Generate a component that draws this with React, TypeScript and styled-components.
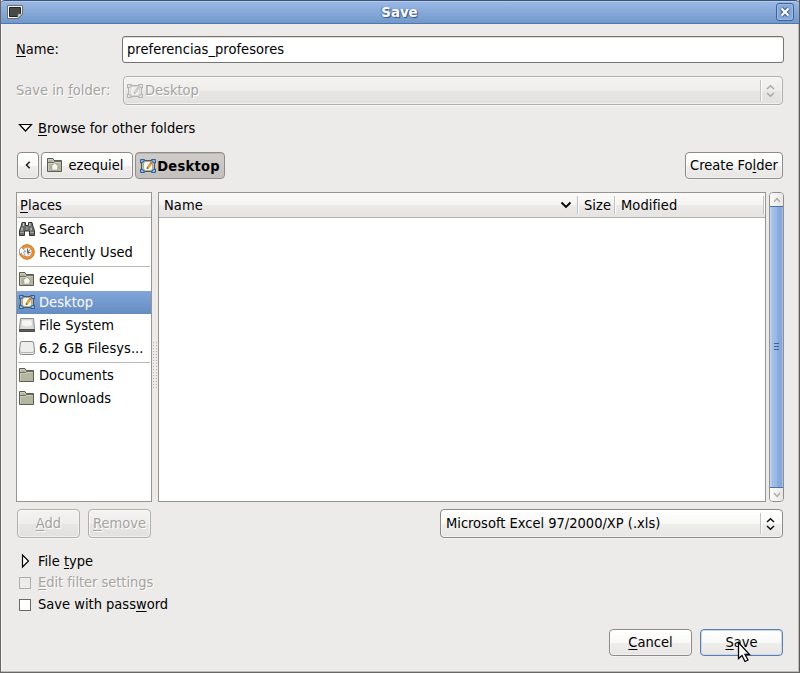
import React from 'react';
import styled, { createGlobalStyle, css } from 'styled-components';

const Global = createGlobalStyle`
  * { box-sizing: border-box; }
  body { margin: 0; }
  u { text-decoration: underline; text-decoration-thickness: 1px; text-underline-offset: 2px; text-decoration-skip-ink: none; }
`;

const Window = styled.main`
  width: 800px; height: 673px; overflow: hidden; position: relative;
  display: flex; flex-direction: column;
  background: #edebea; color: #000;
  border-left: 1px solid #686765; border-right: 1px solid #5c5b5a; border-bottom: 1px solid #686765;
  box-shadow: inset -1px -1px #bdbbb9, inset 1px 0 #f8f7f6;
  font: 14.53px/20px "DejaVu Sans Condensed", "DejaVu Sans", sans-serif;
  font-stretch: condensed;
`;

const TitleBar = styled.header`
  height: 24px; flex: none; margin: 0 -1px; padding: 0 6px 0 7px;
  display: grid; grid-template-columns: 16px 1fr 18px; align-items: center;
  background: linear-gradient(#9bb9e5, #7299cc);
  border-top: 1px solid #3b5375; border-bottom: 1px solid #4f77ac;
  border-radius: 5px 5px 0 0; box-shadow: inset 0 1px #b3cbed;
  color: #fff;
`;
const Title = styled.h1`
  margin: 0; padding: 2px 0 0; text-align: center; font: bold 13.33px/20px "DejaVu Sans", sans-serif;
  font-stretch: normal; text-shadow: 1px 1px 1px #34537e, -1px 0 1px #5478ab;
`;

const Body = styled.div`
  flex: 1; padding: 12px 16px 0 15px; display: flex; flex-direction: column;
`;
const FieldRow = styled.div<{ $gap: number }>`
  display: grid; grid-template-columns: 106px 1fr; align-items: center; margin-bottom: ${p => p.$gap}px;
`;
const Label = styled.label<{ $off?: boolean }>`
  padding-bottom: 2px; white-space: pre; ${p => p.$off && css`color: #a5a3a1; text-shadow: 1px 1px #fff;`}
`;
const Entry = styled.div`
  height: 27px; margin-right: -1px; padding: 2px 4px; background: #fff; border: 1px solid #767370; border-radius: 3px;
  box-shadow: inset 0 1px #dddcdb; white-space: pre; letter-spacing: .04px;
`;

const raised = css<{ $off?: boolean }>`
  border: 1px solid #8d8b88; border-radius: 4px;
  background: linear-gradient(#fff, #f8f8f7 50%, #efeeed 51%, #e7e6e5);
  box-shadow: inset 0 0 0 1px #ffffff80, 0 1px #f5f4f3;
  ${p => p.$off && css`
    color: #a5a3a1; text-shadow: 1px 1px #fff; border-color: #b1afac;
    background: linear-gradient(#f4f3f2, #eeedec 50%, #e7e6e5 51%, #e2e1e0);
  `}
`;
const Combo = styled.div<{ $off?: boolean; $w: number; $pad: number }>`
  ${raised}
  height: 29px; width: ${p => p.$w}px; margin-left: auto; padding: 0 4px 0 ${p => p.$pad}px;
  display: flex; align-items: center; gap: 2px; white-space: pre;
`;
const ComboText = styled.span`
  padding-bottom: 2px;
`;
const ComboTail = styled.span`
  margin-left: auto; height: 21px; width: 18px; padding-left: 1px; display: flex; align-items: center; justify-content: center;
  border-left: 1px solid #c4c2bf; box-shadow: inset 1px 0 #fff;
`;
const Button = styled.button<{ $off?: boolean; $w: number; $h?: number; $active?: boolean; $focus?: boolean; $lift?: number; $gap?: number }>`
  font: inherit; font-stretch: inherit; color: #000; white-space: pre;
  ${raised}
  width: ${p => p.$w}px; height: ${p => p.$h ?? 27}px; padding: 0 0 ${p => p.$lift ?? 0}px;
  display: flex; align-items: center; justify-content: center; gap: ${p => p.$gap ?? 0}px;
  ${p => p.$active && css`
    font-weight: bold; letter-spacing: .25px; background: linear-gradient(#cfccca, #c3c0bd);
    box-shadow: inset 0 1px #b8b5b2; border-color: #908d8a;
  `}
  ${p => p.$focus && css`border-color: #5e7fae; box-shadow: inset 0 0 0 1px #c8d8ed;`}
`;

const Expander = styled.div<{ $gap: number }>`
  height: 20px; display: flex; align-items: center; padding-left: 2px; margin-bottom: ${p => p.$gap}px;
  svg { width: 20px; height: 16px; }
`;
const PathBar = styled.nav`
  display: flex; gap: 2px; padding: 0 0 0 1px; margin-bottom: 13px;
  > :last-child { margin-left: auto; }
`;
const Browser = styled.section`
  display: flex; height: 310px; margin-bottom: 7px;
`;
const Pane = styled.div<{ $w: number }>`
  width: ${p => p.$w}px; flex: none; background: #fff; border: 1px solid #979592; display: flex; flex-direction: column; overflow: hidden;
`;
const HeaderRow = styled.div`
  height: 25px; flex: none; display: flex; align-items: center; border-bottom: 1px solid #b3b1ae;
  background: linear-gradient(#fbfbfa, #f4f3f2 50%, #ebeae9 51%, #e5e4e2);
`;
const Column = styled.div<{ $w: number; $pad: number }>`
  width: ${p => p.$w}px; flex: none; height: 18px; padding: 0 5px 0 ${p => p.$pad}px; display: flex; align-items: center; justify-content: space-between;
  border-right: 1px solid #c2c0bd; box-shadow: 1px 0 #fff; white-space: pre; letter-spacing: .07px;
`;
const Place = styled.div<{ $selected?: boolean }>`
  height: 23px; flex: none; display: flex; align-items: center; gap: 4px; padding: 0 0 2px 2px; white-space: pre;
  letter-spacing: .05px;
  ${p => p.$selected && css`background: linear-gradient(#81a5d8, #658dc2); color: #fff;`}
`;
const Rule = styled.hr`
  flex: none; width: 132px; height: 1px; margin: 2px 1px 1px; border: 0; background: #bbb9b6;
`;
const Grip = styled.div`
  width: 6px; flex: none; align-self: center; height: 48px; margin-top: 36px;
  background: conic-gradient(from 270deg at 1px 1px, #b5b3b0 90deg, #fff0 90deg) 1px 1px / 3px 3px;
`;
const ScrollBar = styled.div`
  width: 15px; flex: none; margin-left: 3px; display: flex; flex-direction: column;
  border: 1px solid #918f8c; border-radius: 4px; overflow: hidden; background: #f4f3f2;
`;
const Arrow = styled.div`
  height: 13px; display: flex; align-items: center; justify-content: center;
  background: linear-gradient(90deg, #fbfbfa, #e7e6e5);
`;
const Thumb = styled.div`
  flex: 1; margin: 0 -1px; padding-bottom: 2px; border: 1px solid #527099; display: flex; align-items: center; justify-content: center;
  background: linear-gradient(90deg, #bfd3ef 1px, #a1c0ea 2px, #99b8e4 50%, #8aaddd 51%, #83a7d9 12px, #a5c0e5 12px);
`;
const ActionRow = styled.div`
  display: flex; gap: 8px; padding-left: 1px; margin-bottom: 13px;
`;
const Check = styled.div<{ $off?: boolean }>`
  height: 22px; display: flex; align-items: center; gap: 7px; padding-left: 3px;
  ${p => p.$off && css`color: #a5a3a1; text-shadow: 1px 1px #fff; letter-spacing: -.04px;`}
`;
const Box = styled.span<{ $off?: boolean }>`
  width: 12px; height: 12px; background: ${p => p.$off ? '#edebea' : '#fff'}; border: 1px solid ${p => p.$off ? '#b1afac' : '#6c6a67'};
  margin-top: 1px;
`;
const Footer = styled.footer`
  display: flex; gap: 8px; justify-content: flex-end; margin-top: 14px;
`;
const Pointer = styled.svg`
  position: absolute; left: 736px; top: 641px; width: 14px; height: 23px;
`;

const Chevron = ({ d, w = 10, h = 6, color = '#222', sw = 1.6 }: { d: string; w?: number; h?: number; color?: string; sw?: number }) => (
  <svg width={w} height={h} viewBox={`0 0 ${w} ${h}`} fill="none" stroke={color} strokeWidth={sw}><path d={d} /></svg>
);
const UpDown = ({ color }: { color: string }) => (
  <Chevron w={9} h={14} color={color} sw={1.5} d="M1 5 4.500 1.700 8 5M1 9 4.500 12.300 8 9" />
);

const DesktopIcon = ({ off }: { off?: boolean }) => {
  const c = off ? '#b5b3b0' : '#305f9c';
  const f = off ? '#e4e3e1' : '#92b5e1';
  return (
    <svg width="16" height="16" viewBox="0 0 16 16">
      <path d="M1.500 2.500h13v11h-13z" fill={off ? '#e9e8e6' : '#b9bda9'} stroke={off ? '#b5b3b0' : '#565a4c'} />
      <rect x="3.500" y="3.500" width="9" height="9" rx="2.500" fill={off ? '#f0efee' : '#fafaf5'} stroke={off ? '#c5c3c0' : '#85897a'} strokeWidth=".6" />
      <g fill={f} stroke={c}>
        <path d="M.5 1.500h4L3.500 4 .5 5zM15.500 1.500h-4L12.500 4l3 1zM.5 14.500h4L3.500 12l-3-1zM15.500 14.500h-4l1-2.500 3-1z" />
      </g>
      <path d="m7 9.600 3.200-4.800 1.500 1-3.300 4.700z" fill={off ? '#d5d4d2' : '#f5b420'} stroke={off ? '#aaa' : '#a05b15'} strokeWidth=".5" />
      <path d="m10.200 4.800.7-.9 1.400 1-.6.900z" fill={off ? '#bbb' : '#d33'} />
      <path d="m6.700 10.900.3-1.600 1.300.9z" fill={off ? '#aaa' : '#222'} />
    </svg>
  );
};
const FolderIcon = ({ home }: { home?: boolean }) => (
  <svg width="16" height="16" viewBox="0 0 16 16">
    <path d="M.5 14.500v-13h5.500l1 2h7.500v11z" fill="#b4b6a2" stroke="#5b5d50" />
    <path d="M1.500 4.500V2.500h4l1 2" fill="none" stroke="#cfd0c2" />
    <path d="M1 5.500h5.500l1-1H14" fill="none" stroke="#6d6f60" />
    <path d="M1.500 14V6.500H7l1-1h5.500" fill="none" stroke="#d2d3c4" strokeWidth=".8" />
    {home && <path d="M7.800 6 3.700 9.800h1.200V13h5.800V9.800h1.200z" fill="#f6f6ef" stroke="#85877a" strokeWidth=".5" />}
  </svg>
);
const SearchIcon = () => (
  <svg width="16" height="16" viewBox="0 0 16 16">
    <path d="M3 1.500h3.500v3h3v-3H13l1 4 1.500 4v5h-5V10h-5v4.500h-5v-5l1.500-4z" fill="#6a6c69" stroke="#333533" />
    <path d="M4.500 2v3M10.800 2v3M3 6.500v3M12 6.500v3" stroke="#c8cac5" strokeWidth="1.300" />
    <path d="M1 11.500h4M11 11.500h4" stroke="#a1a39e" />
    <path d="M7 5.500v3.500h2V5.500z" fill="#888a85" />
  </svg>
);
const RecentIcon = () => (
  <svg width="16" height="16" viewBox="0 0 16 16">
    <circle cx="8" cy="8" r="7.300" fill="#fb912e" stroke="#cf6f1c" />
    <circle cx="8.200" cy="8" r="4.900" fill="#eeeeec" stroke="#a6744a" strokeWidth=".7" />
    <path d="M8.500 4.500v4h3M11 5.500l-2.500 3 1 2" fill="none" stroke="#555753" strokeWidth=".9" />
    <path d="M.6 5v5.500l1.800-1.300C3.500 11.500 5 12.400 7 13 5.200 11 4.700 9 4.800 7.300l1.900.2L2.700 3.600z" fill="#fff" stroke="#777" strokeWidth=".6" />
  </svg>
);
const DriveIcon = ({ dark }: { dark?: boolean }) => dark ? (
  <svg width="16" height="16" viewBox="0 0 16 16">
    <path d="M1.500 1.500h13l1 10v3H.5v-3z" fill="#dcdddb" stroke="#888a85" />
    <path d="M3 3h10l.5 5.500q-5.500 3-11 0z" fill="#f6f6f5" stroke="#c4c4c4" strokeWidth=".5" />
    <path d="M.5 12.500h15v2H.5z" fill="#5c5e5b" stroke="#4b4d4a" />
  </svg>
) : (
  <svg width="16" height="16" viewBox="0 0 16 16">
    <path d="M3 1.500h10q1.500 0 1.700 1.500l.8 8v1.500q0 2-2 2h-11q-2 0-2-2V11l.8-8Q1.500 1.500 3 1.500z" fill="#eeeeec" stroke="#848681" />
    <path d="M1 11q0 1.500 2 1.500h10q2 0 2-1.500" fill="none" stroke="#b5b6b2" />
  </svg>
);

const places: ({ text: string; icon: React.ReactNode; selected?: boolean } | null)[] = [
  { text: 'Search', icon: <SearchIcon /> },
  { text: 'Recently Used', icon: <RecentIcon /> },
  null,
  { text: 'ezequiel', icon: <FolderIcon home /> },
  { text: 'Desktop', icon: <DesktopIcon />, selected: true },
  { text: 'File System', icon: <DriveIcon dark /> },
  { text: '6.2 GB Filesys...', icon: <DriveIcon /> },
  null,
  { text: 'Documents', icon: <FolderIcon /> },
  { text: 'Downloads', icon: <FolderIcon /> },
];

export default function App() {
  return (
    <Window>
      <Global />
      <TitleBar>
        <svg width="16" height="14" viewBox="0 0 16 14">
          <path d="M.5.5h15v9l-4 4H.5z" fill="#f5f5f3" stroke="#6d6e6b" />
          <path d="M2.500 2.500h11v6l-3 3h-8z" fill="#474b49" stroke="#222" />
          <path d="M11 13V9h4z" fill="#ddd" stroke="#777" strokeWidth=".6" />
        </svg>
        <Title>Save</Title>
        <svg width="18" height="18" viewBox="0 0 18 18">
          <rect x=".5" y=".5" width="17" height="17" rx="2.500" fill="#86a9da" stroke="#3f6394" />
          <rect x="1.500" y="1.500" width="15" height="15" rx="2" fill="none" stroke="#9dbbe5" />
          <path d="m5.500 5.500 7 7m0-7-7 7" stroke="#3f6394" strokeWidth="4.500" />
          <path d="m5.500 5.500 7 7m0-7-7 7" stroke="#fff" strokeWidth="2.300" />
        </svg>
      </TitleBar>
      <Body>
        <FieldRow $gap={13}>
          <Label><u>N</u>ame:</Label>
          <Entry>preferencias_profesores</Entry>
        </FieldRow>
        <FieldRow $gap={13}>
          <Label $off>Save in <u>f</u>older:</Label>
          <Combo $off $w={660} $pad={3}><DesktopIcon off /><ComboText>Desktop</ComboText><ComboTail><UpDown color="#aaa8a5" /></ComboTail></Combo>
        </FieldRow>
        <Expander $gap={14}>
          <svg viewBox="0 0 20 16"><path d="M1.500 4.500h12L7.500 11z" fill="#fff" stroke="#000" strokeWidth="1.200" /></svg>
          <span><u>B</u>rowse for other folders</span>
        </Expander>
        <PathBar>
          <Button $w={22} $lift={2}><Chevron w={6} h={8} d="M4.700 .7 1.500 4l3.200 3.300" /></Button>
          <Button $w={92} $lift={2} $gap={6}><FolderIcon home /><span>ezequiel </span></Button>
          <Button $w={90} $active $gap={1}><DesktopIcon /><span>Desktop</span></Button>
          <Button $w={98} $lift={2}><span>Create Fo<u>l</u>der</span></Button>
        </PathBar>
        <Browser>
          <Pane $w={136}>
            <HeaderRow><Column $w={140} $pad={3}><span><u>P</u>laces</span></Column></HeaderRow>
            {places.map((p, i) => p
              ? <Place key={i} $selected={p.selected}>{p.icon}<span>{p.text}</span></Place>
              : <Rule key={i} />)}
          </Pane>
          <Grip />
          <Pane $w={608}>
            <HeaderRow>
              <Column $w={419} $pad={5}>Name<Chevron w={12} h={8} sw={1.800} color="#000" d="M1.500 1.500 6 6l4.500-4.500" /></Column>
              <Column $w={37} $pad={6}>Size</Column>
              <Column $w={149} $pad={6}>Modified</Column>
            </HeaderRow>
          </Pane>
          <ScrollBar>
            <Arrow><Chevron w={8} h={6} sw={1.200} color="#aaa8a5" d="M1 5l3-3.500L7 5" /></Arrow>
            <Thumb><Chevron w={6} h={8} sw={1} color="#3f6394" d="M0 1.500h5M0 4.500h5M0 7.500h5" /></Thumb>
            <Arrow><Chevron w={8} h={6} sw={1.200} color="#aaa8a5" d="M1 1l3 3.500L7 1" /></Arrow>
          </ScrollBar>
        </Browser>
        <ActionRow>
          <Button $off $w={63} $h={29} $lift={2}><span><u>A</u>dd</span></Button>
          <Button $off $w={63} $h={29} $lift={2}><span><u>R</u>emove</span></Button>
          <Combo $w={343} $pad={5}><ComboText>Microsoft Excel 97/2000/XP (.xls)</ComboText><ComboTail><UpDown color="#111" /></ComboTail></Combo>
        </ActionRow>
        <Expander $gap={0}>
          <svg viewBox="0 0 20 16"><path d="M4.500 2v12l6-6z" fill="#fff" stroke="#000" strokeWidth="1.200" /></svg>
          <span>File <u>t</u>ype</span>
        </Expander>
        <Check $off><Box $off /><span><u>E</u>dit filter settings</span></Check>
        <Check><Box /><span>Save with pass<u>w</u>ord</span></Check>
        <Footer>
          <Button $w={83} $h={27} $lift={2}><span><u>C</u>ancel</span></Button>
          <Button $w={83} $h={27} $lift={2} $focus><span><u>S</u>ave</span></Button>
        </Footer>
      </Body>
      <Pointer viewBox="0 0 14 23">
        <path d="M1.500 1.500v16l3.500-3 3 6 3-1.500-3-5.500h4.500z" fill="#fff" stroke="#000" strokeWidth="1.300" />
      </Pointer>
    </Window>
  );
}
